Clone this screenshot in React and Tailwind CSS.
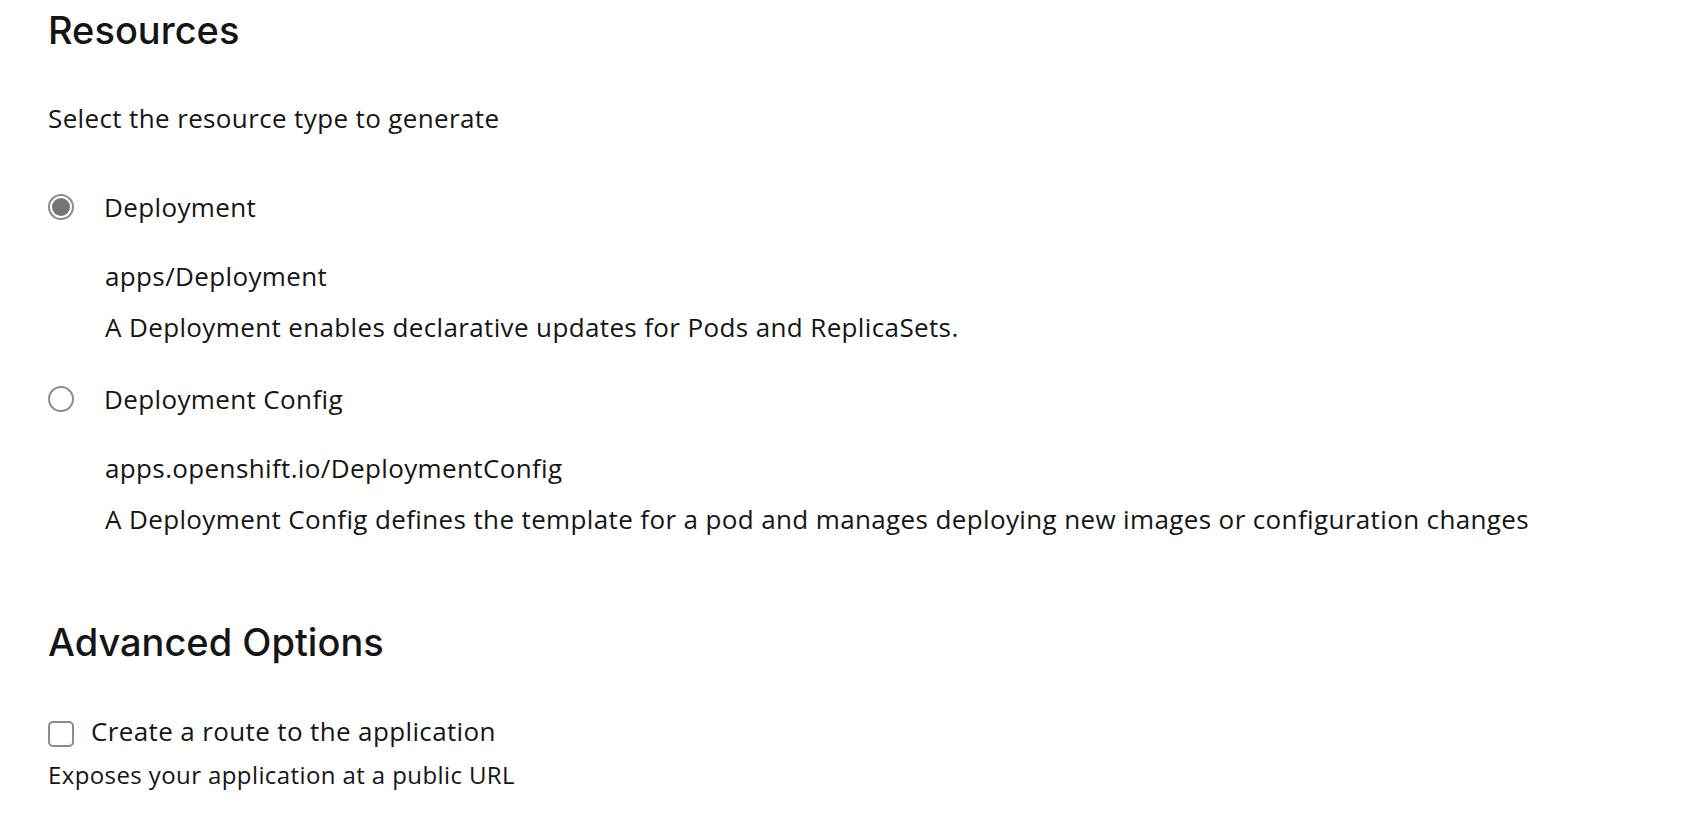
import React, { useState } from 'react';

const options = [
    {
        id: 'deployment',
        label: 'Deployment',
        kind: 'apps/Deployment',
        description: 'A Deployment enables declarative updates for Pods and ReplicaSets.',
    },
    {
        id: 'deployment-config',
        label: 'Deployment Config',
        kind: 'apps.openshift.io/DeploymentConfig',
        description:
            'A Deployment Config defines the template for a pod and manages deploying new images or configuration changes',
    },
];

function Radio({ checked }) {
    return (
        <span className="flex items-center justify-center w-[26px] h-[26px] rounded-full border-2 border-[#8a8d90] bg-white shrink-0">
            {checked && <span className="w-[18px] h-[18px] rounded-full bg-[#737679]" />}
        </span>
    );
}

export default function App() {
    const [selected, setSelected] = useState('deployment');
    const [route, setRoute] = useState(false);

    return (
        <div className="min-h-screen bg-white text-[#151515] font-['Open_Sans',sans-serif] tracking-[0.37px] px-[48px] pt-[7px]">
            {/* Resources */}
            <h2 className="text-[38px] leading-[46px] font-medium tracking-normal font-['Inter',sans-serif]">
                Resources
            </h2>
            <p className="mt-[47px] text-[26px] leading-[36px]">Select the resource type to generate</p>

            <div className="mt-[53px] flex flex-col gap-[36px]">
                {options.map((opt) => (
                    <div key={opt.id}>
                        <label
                            className="flex items-center gap-[30px] h-[36px] cursor-pointer"
                            onClick={() => setSelected(opt.id)}
                        >
                            <Radio checked={selected === opt.id} />
                            <span className="text-[26px] leading-[36px]">{opt.label}</span>
                        </label>
                        <div className="pl-[57px] mt-[33px] flex flex-col gap-[15px] text-[26px] leading-[36px]">
                            <span>{opt.kind}</span>
                            <span>{opt.description}</span>
                        </div>
                    </div>
                ))}
            </div>

            {/* Advanced Options */}
            <h2 className="mt-[82px] text-[38px] leading-[46px] font-medium tracking-normal font-['Inter',sans-serif]">
                Advanced Options
            </h2>
            <label
                className="mt-[48px] flex items-center gap-[17px] h-[36px] cursor-pointer"
                onClick={() => setRoute(!route)}
            >
                <span className="w-[26px] h-[26px] mt-[6px] rounded-[5px] border-2 border-[#8a8d90] bg-white shrink-0 flex items-center justify-center">
                    {route && (
                        <svg viewBox="0 0 16 16" className="w-4 h-4 text-[#06c]">
                            <path d="M3 8l3 3 7-7" fill="none" stroke="currentColor" strokeWidth="2" />
                        </svg>
                    )}
                </span>
                <span className="text-[26px] leading-[36px]">Create a route to the application</span>
            </label>
            <p className="mt-[10px] text-[24px] leading-[31px] tracking-[0.4px]">Exposes your application at a public URL</p>
        </div>
    );
}
